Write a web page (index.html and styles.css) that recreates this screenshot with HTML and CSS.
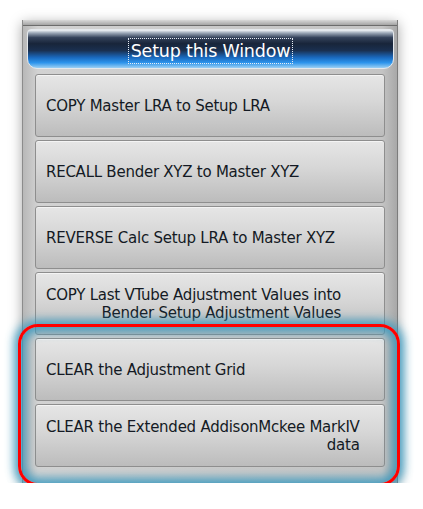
FILE: index.html
```html
<!DOCTYPE html>
<html lang="en">
<head>
  <meta charset="UTF-8">
  <title>Setup this Window</title>
  <link rel="stylesheet" href="styles.css">
</head>
<body>

<div class="panel">
  <div class="panel-top"></div>
  <div class="header">
    <span class="header-title">Setup this Window</span>
  </div>

  <div class="buttons">
    <div class="btn"><span class="btn-text">COPY Master LRA to Setup LRA</span></div>
    <div class="btn"><span class="btn-text">RECALL Bender XYZ to Master XYZ</span></div>
    <div class="btn"><span class="btn-text">REVERSE Calc Setup LRA to Master XYZ</span></div>
    <div class="btn"><span class="btn-text">COPY Last VTube Adjustment Values into<br>Bender Setup Adjustment Values</span></div>
    <div class="btn"><span class="btn-text">CLEAR the Adjustment Grid</span></div>
    <div class="btn"><span class="btn-text">CLEAR the Extended AddisonMckee MarkIV<br>data</span></div>
  </div>

  <!-- highlight drawn over the last two buttons -->
  <div class="highlight"></div>
</div>

</body>
</html>
```

FILE: styles.css
```css
body {
  margin: 0;
  padding: 0;
  background-color: #fff;
  font-family: "DejaVu Sans", sans-serif;
}
.panel {
  position: relative;
  width: 376px;
  height: 463px;
  margin: 20px 0 0 22px;
  background: linear-gradient(90deg, #b8b8b8 0%, #d2d2d2 4%, #cacaca 50%, #c4c4c4 96%, #a8a8a8 100%);
  border-left: 1px solid #8c8c8c;
  border-right: 1px solid #7c7c7c;
  box-shadow: 0 3px 12px rgba(0, 0, 0, 0.35);
  box-sizing: border-box;
  display: flex;
  flex-direction: column;
}
.panel-top {
  height: 5px;
  background: linear-gradient(#d8d8d8, #a4a4a4);
  border-bottom: 1px solid #6c6c6c;
}
.header {
  margin: 3px 3px 0 4px;
  height: 40px;
  box-sizing: border-box;
  border: 1px solid #e4e8ec;
  border-radius: 4px 4px 10px 10px;
  background: linear-gradient(#f2f5f8 0%, #9aa6b6 8%, #34425a 20%, #18253a 36%, #1a3050 54%, #1a68bc 72%, #2c94ec 86%, #9cd0f4 100%);
  display: flex;
  align-items: center;
  justify-content: center;
  padding-top: 4px;
}
.header-title {
  color: #fff;
  font-size: 17.5px;
  letter-spacing: -0.2px;
  line-height: 24px;
  padding: 0 2px;
  outline: 1px dotted #e8eef6;
}
.buttons {
  display: flex;
  flex-direction: column;
  gap: 3px;
  margin: 5px 12px 0 12px;
}
.btn {
  height: 63px;
  box-sizing: border-box;
  border: 1px solid #8e8e8e;
  border-radius: 3px;
  background: linear-gradient(#e6e6e6 0%, #d6d6d6 45%, #bcbcbc 100%);
  box-shadow: inset 0 1px 0 #f4f4f4;
  display: flex;
  align-items: center;
  padding-left: 10px;
}
.btn-text {
  display: inline-block;
  text-align: right;
  color: #141a24;
  font-size: 15px;
  letter-spacing: -0.25px;
  line-height: 18px;
}
.highlight {
  position: absolute;
  left: -5px;
  top: 304px;
  width: 382px;
  height: 162px;
  box-sizing: border-box;
  border: 3px solid #f00;
  border-radius: 20px;
  box-shadow: 0 0 10px 4px rgba(50, 150, 190, 0.85), inset 0 0 10px 5px rgba(50, 150, 190, 0.85);
}
```
